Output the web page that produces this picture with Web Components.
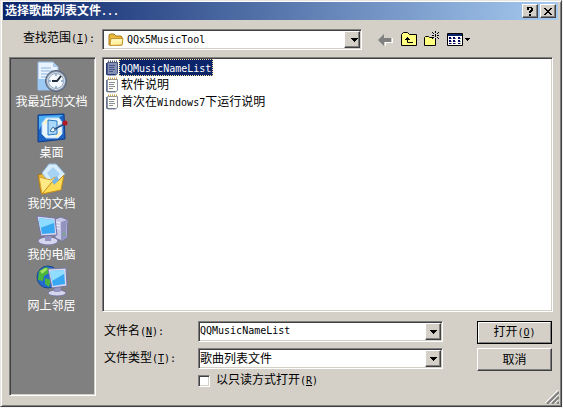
<!DOCTYPE html>
<html lang="zh-CN">
<head>
<meta charset="utf-8">
<title>选择歌曲列表文件...</title>
<style>
	:root {
		--face: #d4d0c8;
		--shadow: #808080;
		--dark: #404040;
		--navy: #0a246a;
		--cjk: "Noto Sans CJK SC", sans-serif;
		--latin: "DejaVu Sans Mono", "Noto Sans CJK SC", monospace;
	}

	body {
		background: #f4f4f4;
		color: #000;
		display: flex;
		font: 12px/16px var(--cjk);
		margin: 0;
		min-height: 100vh;
	}
</style>
</head>
<body>
<dialog-window heading="选择歌曲列表文件...">
	<look-in slot="top" label="查找范围" key="I" value="QQx5MusicTool"></look-in>
	<tool-bar slot="top"></tool-bar>
	<places-bar slot="places">
		<place-item icon="recent" label="我最近的文档"></place-item>
		<place-item icon="desktop" label="桌面"></place-item>
		<place-item icon="documents" label="我的文档"></place-item>
		<place-item icon="computer" label="我的电脑"></place-item>
		<place-item icon="network" label="网上邻居"></place-item>
	</places-bar>
	<file-list>
		<file-item name="QQMusicNameList" selected></file-item>
		<file-item name="软件说明"></file-item>
		<file-item name="首次在Windows7下运行说明"></file-item>
	</file-list>
	<file-form></file-form>
</dialog-window>

<script>
const icons = {
	folder: [16, 16, `
		<path d="M1 13V3l1-1h4l2 2h5l1 1v8z" fill="#e8b93c" stroke="#a87a18"/>
		<path d="M2 13.5L3 6.500h12l-1 6.500z" fill="#fff2a0" stroke="#c79426"/>
		<path d="M3.500 12l.7-4h9.600" fill="none" stroke="#fffbd8"/>`],
	note: [14, 16, `
		<path d="M2.500 2.500h10v11l-2 1.500h-8z" fill="#fdfdf6" stroke="#8b92a8"/>
		<path d="M1.500 3v11.500h9" fill="none" stroke="#6d7690"/>
		<path d="M3 1.500h10" stroke="#c9a24a" stroke-width="2" stroke-dasharray="1 1"/>
		<path d="M4 5.500h6M4 7.500h5M4 9.500h6M4 11.500h4" stroke="#8a8f9c"/>`],
	noteSelected: [14, 16, `
		<path d="M2.500 2.500h10v11l-2 1.500h-8z" fill="#8490b4" stroke="#4a5686"/>
		<path d="M1.500 3v11.500h9" fill="none" stroke="#26376f"/>
		<path d="M3 1.500h10" stroke="#5a5c68" stroke-width="2" stroke-dasharray="1 1"/>
		<path d="M4 5.500h6M4 7.500h5M4 9.500h6M4 11.500h4" stroke="#46548a"/>`],
	back: [16, 16, `
		<path d="M7 15V11h7V7h1v5H8v3z" fill="#fff"/>
		<path d="M0 9l6-6v4h7v4H6v4z" fill="#808080"/>`],
	up: [16, 16, `
		<path d="M.5 14.500v-11l2-2h4l2 2h7v11z" fill="#ffff80" stroke="#000"/>
		<path d="M6.500 7v4.500H12M4 8.500h5M5 7.500h3M6 6.500h1" fill="none" stroke="#000"/>`],
	create: [16, 16, `
		<path d="M.5 14.500v-8l1-1h3l1 1h6v8z" fill="#ffff80" stroke="#000"/>
		<path d="M9 6h3v2H9z" fill="#d4d0c8"/>
		<path d="M11 0h1v2h-1zM11 3h1v3h-1zM11 7h1v2h-1zM8 4h2v1H8zM13 4h2v1h-2zM8 1h1v1H8zM9 2h1v1H9zM14 1h1v1h-1zM13 2h1v1h-1zM9 6h1v1H9zM8 7h1v1H8zM13 6h1v1h-1zM14 7h1v1h-1z"/>`],
	views: [24, 16, `
		<path d="M.5 2.500h15v12H.5z" fill="#fff" stroke="#000"/>
		<path d="M1 3h14v2H1z" fill="#0a246a"/>
		<path d="M2 6h2v2H2zm4 0h2v2H6zm5 0h2v2h-2zM2 9h2v2H2zm4 0h2v2H6zm5 0h2v2h-2zM2 12h2v1H2zm4 0h2v1H6zm5 0h2v1h-2z" fill="#000060"/>
		<path d="M4 7h1v1H4zm4 0h1v1H8zm5 0h1v1h-1zM4 10h1v1H4zm4 0h1v1H8zm5 0h1v1h-1zM4 12h1v1H4zm4 0h1v1H8zm5 0h1v1h-1z" fill="#888"/>
		<path d="M18 7h5v1h-1v1h-1v1h-1V9h-1V8h-1z"/>`],
	help: [8, 9, `<path d="M1 0h5v1h1v3H6v1H5v1H3V4h1V3h1V1H3v2H1V1zM3 7h2v2H3z"/>`],
	close: [8, 9, `<path d="M0 1h2v1h1v1h2V2h1V1h2v1H7v1H6v1H5v1h1v1h1v1h1v1H6V7H5V6H3v1H2v1H0V7h1V6h1V5h1V4H2V3H1V2H0z"/>`],
	arrow: [7, 4, `<path d="M0 0h7v1H6v1H5v1H4v1H3V3H2V2H1V1H0z"/>`],
	grip: [14, 14, `
		<path d="M0 13L13 0M5 13l8-8M10 13l3-3" stroke="#fff"/>
		<path d="M2 14L14 2M7 14l7-7M12 14l2-2" stroke="#808080" stroke-width="2"/>`],
	recent: [32, 32, `
		<path d="M2 1h15l5 5v23H2z" fill="#e9f3ff" stroke="#91b8e5"/>
		<path d="M2 18h20v11H2z" fill="#9cc8f4"/>
		<path d="M17 1v5h5z" fill="#a9c9ec"/>
		<path d="M5 7h10M5 10h12M5 13h7M5 16h5" stroke="#8fb4dc"/>
		<circle cx="20" cy="20" r="10.500" fill="#8797ad" stroke="#536075"/>
		<circle cx="20" cy="20" r="9" fill="#d5dfe9"/>
		<circle cx="20" cy="20" r="7.500" fill="#f6fbff" stroke="#9aabbd"/>
		<path d="M16 20h5l4-5" fill="none" stroke="#222d3c" stroke-width="2"/>
		<path d="M20 13v2M20 25v2M13 20h2M25 20h2" stroke="#3b79bb"/>`],
	desktop: [32, 32, `
		<path d="M2 3l26-1 1 25-27 3z" fill="#1c63c4" stroke="#0b3c8d"/>
		<path d="M3 4l24-1-6 4H9L3 18z" fill="#4eb0f2"/>
		<path d="M10 6h13l3 4v12l-4 4H10l-4-4V11z" fill="#e9f6ff" stroke="#b9d9f5"/>
		<path d="M8 12l4-4M24 20l-4 5" stroke="#fff1b8" stroke-width="2"/>
		<path d="M12 8l9 1v13l-9 1z" fill="#acd8fa" stroke="#2479c7"/>
		<path d="M14 19l3-4 4 2-4 3z" fill="#f8ffff" stroke="#326fa9"/>
		<path d="M18 17l10-5" stroke="#284e80" stroke-width="2"/>
		<path d="M18 16l8-4" stroke="#9dc9ef"/>
		<circle cx="29" cy="11" r="2.500" fill="#b31822"/>`],
	documents: [32, 32, `
		<path d="M2 12l7-2 4 3 6-2v17L5 30z" fill="#e8b93d" stroke="#a97610"/>
		<path d="M6 10L13 1h7l9 10-12 14z" fill="#d8edfc" stroke="#91b8dc"/>
		<path d="M11 10l6-6 7 7-7 8z" fill="#a7d3f5"/>
		<path d="M3 14l12 3 4-3 1 13-14 4z" fill="#ffe987" stroke="#d2a02f"/>
		<path d="M6 31l10-12 6-1 6-6-3 15z" fill="#ffdc56" stroke="#c58b1a"/>
		<path d="M16 18l5-5 2 4-5 5z" fill="#77b5e7"/>`],
	computer: [32, 32, `
		<path d="M19 5l6-2 7 3-1 18-5 3-7-3z" fill="#c7c8e6" stroke="#73759f"/>
		<path d="M25 8l6-2-1 18-5 3z" fill="#9294be"/>
		<path d="M20 8l4 1M20 11l4 1M20 14l4 1" stroke="#f3f3ff"/>
		<circle cx="28" cy="20" r="1" fill="#54c653"/>
		<ellipse cx="12" cy="27" rx="10" ry="4" fill="#d5d6ee" stroke="#7779a5"/>
		<path d="M9 19h7l-1 8H9z" fill="#9294c2"/>
		<path d="M1 2l18 2 2 17-16 1z" fill="#d6d7ef" stroke="#7073a5"/>
		<path d="M3 4l15 2 1 13-13 1z" fill="#38a8f3"/>
		<path d="M3 4l15 2v3L4 14z" fill="#8ddcff"/>`],
	network: [32, 32, `
		<circle cx="12" cy="12" r="11" fill="#226ad1" stroke="#164785"/>
		<path d="M3 6l7-4 5 2-2 4-5 3-1 5-5-1zM9 13l6 2-2 7-4-3z" fill="#4bb43c"/>
		<path d="M4 6l5-3 3 1-6 5z" fill="#a1e45d"/>
		<ellipse cx="21" cy="28" rx="9" ry="3" fill="#d5d6ee" stroke="#7779a5"/>
		<path d="M19 20h7l-2 7h-6z" fill="#9294c2"/>
		<path d="M12 4l18-1 1 18-15 2z" fill="#d9daf0" stroke="#7477a7"/>
		<path d="M14 6l14-1 1 14-12 2z" fill="#38a8f3"/>
		<path d="M14 6l14-1v4l-12 7z" fill="#91ddff"/>`]
};

const base = `
	*, :host { box-sizing: border-box; }
	:host { display: block; }
	.latin { font: 10px/16px var(--latin); }
	button, input, select { color: inherit; font: inherit; margin: 0; }
	button {
		align-items: center;
		background: var(--face);
		border: 0;
		display: flex;
		justify-content: center;
		padding: 0;
	}
	.raised {
		border: 1px solid;
		border-color: #fff var(--dark) var(--dark) #fff;
		box-shadow: inset -1px -1px var(--shadow);
	}
	.sunken {
		border: 1px solid;
		border-color: var(--shadow) #fff #fff var(--shadow);
		box-shadow: inset 1px 1px var(--dark), inset -1px -1px var(--face);
	}
`;

// ASCII runs take the half-width face: two letters to one Chinese character
const mixed = text => text.replace(/[\x20-\x7e]+/g, run => `<span class="latin">${run}</span>`);
const keyed = (text, key, end = '') => `${text}<span class="latin">(<u>${key}</u>)${end}</span>`;

class Base extends HTMLElement {
	constructor() {
		super();
		this.attachShadow({ mode: 'open' });
	}

	connectedCallback() {
		this.shadowRoot.innerHTML = `<style>${base}${this.styles()}</style>${this.html()}`;
	}

	styles() { return ''; }
	html() { return '<slot></slot>'; }
	attr(name) { return this.getAttribute(name) || ''; }
}

class GlyphIcon extends Base {
	styles() { return ':host { flex: none; } svg { display: block; }'; }

	html() {
		const [w, h, shapes] = icons[this.attr('name')];
		return `<svg width="${w}" height="${h}" viewBox="0 0 ${w} ${h}" aria-hidden="true">${shapes}</svg>`;
	}
}

class DialogWindow extends Base {
	styles() {
		return `
			:host {
				background: var(--face);
				border: 1px solid;
				border-color: #e8e6e0 var(--dark) var(--dark) #e8e6e0;
				box-shadow: inset 1px 1px #fff, inset -1px -1px var(--shadow);
				display: flex;
				flex: 1;
				flex-direction: column;
				margin: 0 1px 1px 0;
				padding: 1px 3px 0 2px;
				position: relative;
			}
			header {
				align-items: center;
				background: linear-gradient(90deg, var(--navy), #a6caf0);
				color: #fff;
				display: flex;
				gap: 2px;
				height: 18px;
				padding: 0 2px;
			}
			h1 { flex: 1; font: bold 12px/16px var(--cjk); margin: 0; }
			h1 .latin { font-weight: bold; }
			header button { height: 14px; width: 16px; }
			.top { display: flex; height: 37px; padding: 9px 5px 7px 6px; }
			main { display: flex; flex: 1; gap: 6px; padding: 0 5px 10px 6px; }
			.right { display: flex; flex: 1; flex-direction: column; gap: 9px; }
			.grip { bottom: 2px; position: absolute; right: 2px; }
		`;
	}

	html() {
		return `
			<header>
				<h1>${mixed(this.attr('heading'))}</h1>
				<button class="raised" aria-label="帮助"><glyph-icon name="help"></glyph-icon></button>
				<button class="raised" aria-label="关闭"><glyph-icon name="close"></glyph-icon></button>
			</header>
			<div class="top"><slot name="top"></slot></div>
			<main>
				<slot name="places"></slot>
				<div class="right"><slot></slot></div>
			</main>
			<glyph-icon class="grip" name="grip"></glyph-icon>
		`;
	}
}

const comboStyles = `
	.combo { align-items: stretch; background: #fff; display: flex; height: 21px; min-width: 0; padding: 1px; }
	.combo input, .combo select {
		appearance: none;
		background: none;
		border: 0;
		flex: 1;
		min-width: 0;
		outline: 0;
		padding: 0 0 2px;
	}
	.combo button { flex: none; width: 16px; }
`;
const dropButton = '<button class="raised" type="button" tabindex="-1" aria-label="展开"><glyph-icon name="arrow"></glyph-icon></button>';

class LookIn extends Base {
	styles() {
		return `${comboStyles}
			:host { display: flex; flex: 1; }
			label { flex: none; padding-right: 7px; text-align: right; width: 93px; }
			.combo { flex: 1; }
			.combo glyph-icon:first-child { padding: 1px 0 0 4px; }
			.combo select { padding: 0 0 0 3px; }
		`;
	}

	html() {
		return `
			<label for="folder">${keyed(this.attr('label'), this.attr('key'), ':')}</label>
			<div class="combo sunken">
				<glyph-icon name="folder"></glyph-icon>
				<select id="folder" class="latin"><option>${this.attr('value')}</option></select>
				${dropButton}
			</div>
		`;
	}
}

class ToolBar extends Base {
	styles() {
		return `
			:host { display: flex; flex: none; gap: 7px; padding: 1px 0 0 16px; width: 191px; }
			button { background: none; height: 18px; }
		`;
	}

	html() {
		return [['back', '后退'], ['up', '向上一级'], ['create', '新建文件夹'], ['views', '查看']]
			.map(([name, title]) => `<button title="${title}"><glyph-icon name="${name}"></glyph-icon></button>`)
			.join('');
	}
}

class PlacesBar extends Base {
	styles() {
		return `
			:host { flex: none; width: 87px; }
			nav {
				background: var(--shadow);
				display: flex;
				flex-direction: column;
				gap: 3px;
				height: 100%;
				padding: 3px 2px 0 0;
			}
		`;
	}

	html() { return '<nav class="sunken"><slot></slot></nav>'; }
}

class PlaceItem extends Base {
	styles() {
		return `
			button { background: none; color: #fff; flex-direction: column; width: 100%; }
			span { white-space: nowrap; }
		`;
	}

	html() {
		return `<button><glyph-icon name="${this.attr('icon')}"></glyph-icon><span>${this.attr('label')}</span></button>`;
	}
}

class FileList extends Base {
	styles() {
		return `
			:host { display: flex; flex: 1; }
			div { background: #fff; flex: 1; padding: 1px 2px; }
		`;
	}

	html() { return '<div class="sunken" role="listbox"><slot></slot></div>'; }
}

class FileItem extends Base {
	styles() {
		return `
			:host { align-items: center; display: flex; height: 17px; }
			.name { border: 1px solid transparent; height: 17px; line-height: 13px; padding: 0 1px; }
			.name .latin { line-height: 13px; }
			:host([selected]) .name { background: var(--navy); border: 1px dotted #f5db95; color: #fff; }
		`;
	}

	html() {
		const icon = this.hasAttribute('selected') ? 'noteSelected' : 'note';
		this.setAttribute('role', 'option');
		return `<glyph-icon name="${icon}"></glyph-icon><span class="name">${mixed(this.attr('name'))}</span>`;
	}
}

class FileForm extends Base {
	styles() {
		return `${comboStyles}
			form { display: flex; gap: 34px; height: 75px; padding-right: 1px; }
			.fields {
				align-content: start;
				align-items: center;
				display: grid;
				flex: 1;
				grid-template-columns: 96px 1fr;
				row-gap: 6px;
			}
			.fields > label { padding: 0 0 2px 2px; }
			.check { align-items: center; display: flex; gap: 6px; grid-column: 2; height: 12px; }
			.check label { padding-bottom: 2px; }
			input[type=checkbox] { appearance: none; background: #fff; height: 12px; width: 12px; }
			.buttons { display: flex; flex-direction: column; gap: 4px; width: 75px; }
			.buttons button { height: 23px; padding-bottom: 2px; }
			.buttons .default {
				border-color: #fff var(--shadow) var(--shadow) #fff;
				border-width: 2px;
				box-shadow: none;
				outline: 1px solid #000;
				outline-offset: -1px;
			}
		`;
	}

	html() {
		return `
			<form onsubmit="return false">
				<div class="fields">
					<label for="name">${keyed('文件名', 'N', ':')}</label>
					<div class="combo sunken"><input id="name" class="latin" value="QQMusicNameList">${dropButton}</div>
					<label for="type">${keyed('文件类型', 'T', ':')}</label>
					<div class="combo sunken"><select id="type"><option>歌曲列表文件</option></select>${dropButton}</div>
					<div class="check">
						<input id="readonly" class="sunken" type="checkbox">
						<label for="readonly">${keyed('以只读方式打开', 'R')}</label>
					</div>
				</div>
				<div class="buttons">
					<button class="raised default"><span>${keyed('打开', 'O')}</span></button>
					<button class="raised" type="button">取消</button>
				</div>
			</form>
		`;
	}
}

customElements.define('glyph-icon', GlyphIcon);
customElements.define('dialog-window', DialogWindow);
customElements.define('look-in', LookIn);
customElements.define('tool-bar', ToolBar);
customElements.define('places-bar', PlacesBar);
customElements.define('place-item', PlaceItem);
customElements.define('file-list', FileList);
customElements.define('file-item', FileItem);
customElements.define('file-form', FileForm);
</script>
</body>
</html>
